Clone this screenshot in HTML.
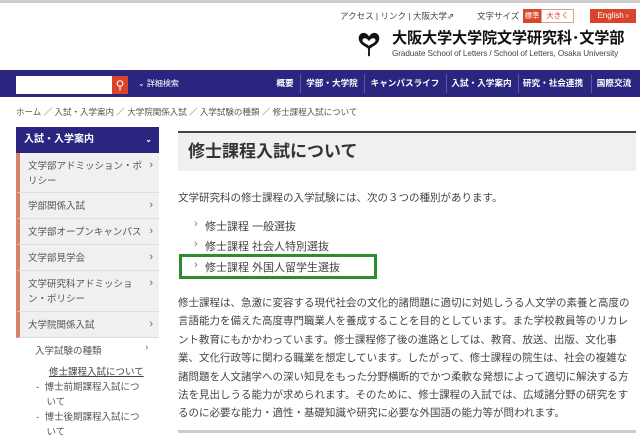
<!DOCTYPE html>
<html><head><meta charset="utf-8"><style>
*{margin:0;padding:0;box-sizing:border-box}
body{width:640px;height:439px;overflow:hidden;background:#fff;font-family:"Liberation Sans","Noto Sans CJK JP",sans-serif;color:#333;position:relative}
.a{position:absolute;white-space:nowrap}
.nav{position:absolute;left:0;top:70px;width:640px;height:27px;background:#2a2680}
.nav .it{position:absolute;top:0;height:27px;line-height:27px;color:#fff;font-size:8.6px;font-weight:bold;text-align:center;white-space:nowrap}
.nav .sp{position:absolute;top:4px;width:1px;height:19px;background:#5a56a8}
.side{position:absolute;left:16px;width:143px;background:#f0f0f0;border-left:4px solid #d9826a;border-bottom:1px solid #ddd;font-size:9.5px;color:#555;padding:6px 0 0 8px;line-height:15px;white-space:nowrap}
.side:after{content:"›";position:absolute;right:6px;top:5px;font-size:11px;color:#666}
.p{position:absolute;left:178px;font-size:10.5px;line-height:18.4px;color:#444;white-space:nowrap}
.li{position:absolute;left:205px;font-size:11px;color:#444;white-space:nowrap}
.li:before{content:"›";position:absolute;left:-11px;color:#777}
</style></head><body>
<div class="a" style="left:0;top:0;width:640px;height:3px;background:#ccc"></div>
<div class="a" style="left:340px;top:10px;font-size:8.5px;color:#444">アクセス | リンク | 大阪大学⇗</div>
<div class="a" style="left:477px;top:10px;font-size:8.5px;color:#444">文字サイズ</div>
<div class="a" style="left:523px;top:9px;width:18px;height:14px;background:#d9442a;color:#fff;font-size:7.5px;line-height:14px;text-align:center">標準</div>
<div class="a" style="left:541px;top:9px;width:33px;height:14px;border:1px solid #d9a090;color:#d9442a;font-size:7.5px;line-height:12px;text-align:center">大きく</div>
<div class="a" style="left:590px;top:9px;width:46px;height:14px;background:#d9442a;color:#fff;font-size:8px;line-height:14px;text-align:center">English ›</div>
<svg class="a" style="left:357px;top:31px" width="24" height="26" viewBox="0 0 24 28"><path d="M12 6 C8 -1 0 2 1 9 C2 15 8 16 11 19 L11 27 L13 27 L13 19 C16 16 22 15 23 9 C24 2 16 -1 12 6Z M12 11 C14 7 19 7 19 10 C19 13 14 14 12 16 C10 14 5 13 5 10 C5 7 10 7 12 11Z" fill="#111" fill-rule="evenodd"/></svg>
<div class="a" style="left:392px;top:29px;font-size:15.2px;font-weight:bold;color:#111;line-height:20px;letter-spacing:-0.2px">大阪大学大学院文学研究科･文学部</div>
<div class="a" style="left:392px;top:49px;font-size:8.2px;color:#444;line-height:9px;letter-spacing:-0.1px">Graduate School of Letters / School of Letters, Osaka University</div>
<div class="nav">
<div class="a" style="left:16px;top:6px;width:96px;height:18px;background:#fff"></div>
<div class="a" style="left:112px;top:6px;width:16px;height:18px;background:#d9442a;color:#fff;font-size:12px;line-height:18px;text-align:center">⚲</div>
<div class="a" style="left:138px;top:0;line-height:27px;color:#fff;font-size:8px">⌄ 詳細検索</div>
<div class="it" style="left:274px;width:22px">概要</div><div class="sp" style="left:300px"></div>
<div class="it" style="left:303px;width:58px">学部・大学院</div><div class="sp" style="left:364px"></div>
<div class="it" style="left:367px;width:76px">キャンパスライフ</div><div class="sp" style="left:446px"></div>
<div class="it" style="left:449px;width:65px">入試・入学案内</div><div class="sp" style="left:518px"></div>
<div class="it" style="left:520px;width:66px">研究・社会連携</div><div class="sp" style="left:591px"></div>
<div class="it" style="left:594px;width:40px">国際交流</div>
</div>
<div class="a" style="left:16px;top:106px;font-size:8.5px;color:#555">ホーム ／ 入試・入学案内 ／ 大学院関係入試 ／ 入学試験の種類 ／ 修士課程入試について</div>
<div class="a" style="left:16px;top:127px;width:143px;height:26px;background:#2a2680;color:#fff;font-weight:bold;font-size:10px;line-height:26px;padding-left:8px">入試・入学案内<span style="position:absolute;right:7px;font-size:8px">⌄</span></div>
<div class="side" style="top:153px;height:40px">文学部アドミッション・ポ<br>リシー</div>
<div class="side" style="top:193px;height:26px">学部関係入試</div>
<div class="side" style="top:219px;height:26px">文学部オープンキャンパス</div>
<div class="side" style="top:245px;height:26px">文学部見学会</div>
<div class="side" style="top:271px;height:41px">文学研究科アドミッショ<br>ン・ポリシー</div>
<div class="side" style="top:312px;height:26px">大学院関係入試</div>
<div class="a" style="left:35px;top:343px;font-size:9.5px;color:#555">入学試験の種類</div>
<div class="a" style="left:145px;top:342px;font-size:10px;color:#666">›</div>
<div class="a" style="left:49px;top:364px;font-size:9.5px;color:#444;text-decoration:underline">修士課程入試について</div>
<div class="a" style="left:36px;top:380px;font-size:9.5px;color:#555;line-height:15px">- &nbsp;博士前期課程入試につ<br>&nbsp;&nbsp;&nbsp;&nbsp;いて</div>
<div class="a" style="left:36px;top:410px;font-size:9.5px;color:#555;line-height:15px">- &nbsp;博士後期課程入試につ<br>&nbsp;&nbsp;&nbsp;&nbsp;いて</div>
<div class="a" style="left:178px;top:131px;width:458px;height:40px;background:#f0f0f0;border-top:2px solid #444;font-size:17px;font-weight:bold;color:#333;line-height:38px;padding-left:10px">修士課程入試について</div>
<div class="p" style="top:189px">文学研究科の修士課程の入学試験には、次の３つの種別があります。</div>
<div class="li" style="top:218px">修士課程 一般選抜</div>
<div class="li" style="top:238px">修士課程 社会人特別選抜</div>
<div class="li" style="top:259px">修士課程 外国人留学生選抜</div>
<div class="a" style="left:179px;top:254px;width:198px;height:25px;border:3px solid #2e8b2e"></div>
<div class="p" style="top:294px">修士課程は、急激に変容する現代社会の文化的諸問題に適切に対処しうる人文学の素養と高度の<br>言語能力を備えた高度専門職業人を養成することを目的としています。また学校教員等のリカレ<br>ント教育にもかかわっています。修士課程修了後の進路としては、教育、放送、出版、文化事<br>業、文化行政等に関わる職業を想定しています。したがって、修士課程の院生は、社会の複雑な<br>諸問題を人文諸学への深い知見をもった分野横断的でかつ柔軟な発想によって適切に解決する方<br>法を見出しうる能力が求められます。そのために、修士課程の入試では、広域諸分野の研究をす<br>るのに必要な能力・適性・基礎知識や研究に必要な外国語の能力等が問われます。</div>
<div class="a" style="left:178px;top:430px;width:458px;height:3px;background:#ccc"></div>
</body></html>
